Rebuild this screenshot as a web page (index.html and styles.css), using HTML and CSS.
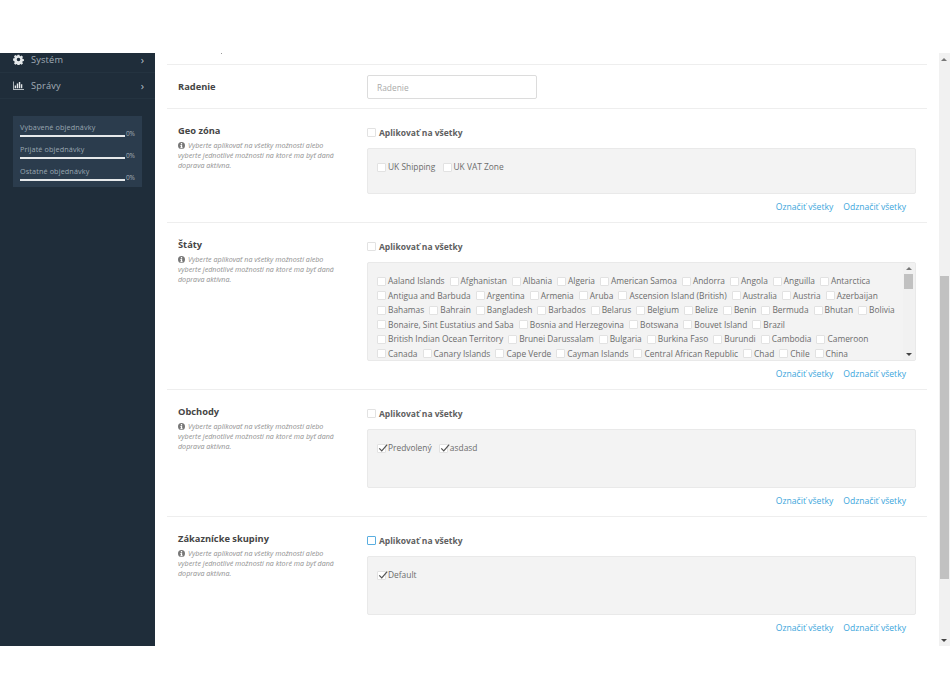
FILE: index.html
```html
<!DOCTYPE html>
<html lang="sk">
<head>
<meta charset="utf-8">
<title>Doprava</title>
<link rel="stylesheet" href="styles.css">
</head>
<body>
<div class="frame">
  <aside class="sidebar">
    <nav class="menu">
      <a class="menu-item first"><svg class="menu-icon" viewBox="0 0 16 16"><path fill="#e4e8ea" fill-rule="evenodd" d="M6.6 1h2.8l.4 1.9 1.2.5 1.6-1.1 2 2-1.100 1.600.5 1.200 1.900.4v2.800l-1.900.4-.5 1.200 1.100 1.600-2 2-1.600-1.100-1.200.5-.4 1.900H6.600l-.4-1.900-1.200-.5-1.600 1.100-2-2 1.100-1.600-.5-1.200L.1 9.400V6.600L2 6.200l.5-1.200L1.400 3.400l2-2L5 2.500l1.200-.5zM8 5.400a2.600 2.600 0 1 0 0 5.200 2.600 2.600 0 0 0 0-5.200z"/></svg><span class="menu-label">Systém</span><span class="chev">›</span></a>
      <a class="menu-item"><svg class="menu-icon" viewBox="0 0 16 16"><path fill="#e4e8ea" d="M0 2h1v11h15v1H0zM2.500 8h2v4h-2zM5.500 5h2v7h-2zM8.500 3h2v9h-2zM11.500 6h2v6h-2z"/></svg><span class="menu-label">Správy</span><span class="chev">›</span></a>
    </nav>
    <div class="stats">
      <div class="stat"><div class="stat-name">Vybavené objednávky</div><div class="stat-line"><span class="bar"></span><span class="pct">0%</span></div></div>
      <div class="stat"><div class="stat-name">Prijaté objednávky</div><div class="stat-line"><span class="bar"></span><span class="pct">0%</span></div></div>
      <div class="stat"><div class="stat-name">Ostatné objednávky</div><div class="stat-line"><span class="bar"></span><span class="pct">0%</span></div></div>
    </div>
  </aside>
  <main class="content">
    <div class="panel">
      <div class="row stub"><span class="speck"></span></div>
      <div class="row radenie">
        <div class="side"><h3 class="title">Radenie</h3></div>
        <div class="field"><input class="text-input" type="text" placeholder="Radenie"></div>
      </div>
      <div class="row geo">
        <div class="side">
          <h3 class="title">Geo zóna</h3>
          <p class="help"><svg class="info" viewBox="0 0 16 16"><path fill="#777" fill-rule="evenodd" d="M8 0a8 8 0 1 1 0 16A8 8 0 0 1 8 0zM6.500 2.500v3h3v-3zM5.500 7v2h1v3h-1v2h5v-2h-1V7z"/></svg>Vyberte aplikovať na všetky možnosti alebo vyberte jednotlivé možnosti na ktoré ma byť daná doprava aktívna.</p>
        </div>
        <div class="field">
          <label class="all"><span class="cb"></span>Aplikovať na všetky</label>
          <div class="box box-geo">
            <span class="opt"><span class="cb"></span>UK Shipping</span>
            <span class="opt"><span class="cb"></span>UK VAT Zone</span>
          </div>
          <div class="links"><a>Označiť všetky</a><a>Odznačiť všetky</a></div>
        </div>
      </div>
      <div class="row staty">
        <div class="side">
          <h3 class="title">Štáty</h3>
          <p class="help"><svg class="info" viewBox="0 0 16 16"><path fill="#777" fill-rule="evenodd" d="M8 0a8 8 0 1 1 0 16A8 8 0 0 1 8 0zM6.500 2.500v3h3v-3zM5.500 7v2h1v3h-1v2h5v-2h-1V7z"/></svg>Vyberte aplikovať na všetky možnosti alebo vyberte jednotlivé možnosti na ktoré ma byť daná doprava aktívna.</p>
        </div>
        <div class="field">
          <label class="all"><span class="cb"></span>Aplikovať na všetky</label>
          <div class="box box-staty">
            <div class="countries">
              <span class="opt"><span class="cb"></span>Aaland Islands</span>
              <span class="opt"><span class="cb"></span>Afghanistan</span>
              <span class="opt"><span class="cb"></span>Albania</span>
              <span class="opt"><span class="cb"></span>Algeria</span>
              <span class="opt"><span class="cb"></span>American Samoa</span>
              <span class="opt"><span class="cb"></span>Andorra</span>
              <span class="opt"><span class="cb"></span>Angola</span>
              <span class="opt"><span class="cb"></span>Anguilla</span>
              <span class="opt"><span class="cb"></span>Antarctica</span>
              <span class="opt"><span class="cb"></span>Antigua and Barbuda</span>
              <span class="opt"><span class="cb"></span>Argentina</span>
              <span class="opt"><span class="cb"></span>Armenia</span>
              <span class="opt"><span class="cb"></span>Aruba</span>
              <span class="opt"><span class="cb"></span>Ascension Island (British)</span>
              <span class="opt"><span class="cb"></span>Australia</span>
              <span class="opt"><span class="cb"></span>Austria</span>
              <span class="opt"><span class="cb"></span>Azerbaijan</span>
              <span class="opt"><span class="cb"></span>Bahamas</span>
              <span class="opt"><span class="cb"></span>Bahrain</span>
              <span class="opt"><span class="cb"></span>Bangladesh</span>
              <span class="opt"><span class="cb"></span>Barbados</span>
              <span class="opt"><span class="cb"></span>Belarus</span>
              <span class="opt"><span class="cb"></span>Belgium</span>
              <span class="opt"><span class="cb"></span>Belize</span>
              <span class="opt"><span class="cb"></span>Benin</span>
              <span class="opt"><span class="cb"></span>Bermuda</span>
              <span class="opt"><span class="cb"></span>Bhutan</span>
              <span class="opt"><span class="cb"></span>Bolivia</span>
              <span class="opt"><span class="cb"></span>Bonaire, Sint Eustatius and Saba</span>
              <span class="opt"><span class="cb"></span>Bosnia and Herzegovina</span>
              <span class="opt"><span class="cb"></span>Botswana</span>
              <span class="opt"><span class="cb"></span>Bouvet Island</span>
              <span class="opt"><span class="cb"></span>Brazil</span>
              <span class="opt"><span class="cb"></span>British Indian Ocean Territory</span>
              <span class="opt"><span class="cb"></span>Brunei Darussalam</span>
              <span class="opt"><span class="cb"></span>Bulgaria</span>
              <span class="opt"><span class="cb"></span>Burkina Faso</span>
              <span class="opt"><span class="cb"></span>Burundi</span>
              <span class="opt"><span class="cb"></span>Cambodia</span>
              <span class="opt"><span class="cb"></span>Cameroon</span>
              <span class="opt"><span class="cb"></span>Canada</span>
              <span class="opt"><span class="cb"></span>Canary Islands</span>
              <span class="opt"><span class="cb"></span>Cape Verde</span>
              <span class="opt"><span class="cb"></span>Cayman Islands</span>
              <span class="opt"><span class="cb"></span>Central African Republic</span>
              <span class="opt"><span class="cb"></span>Chad</span>
              <span class="opt"><span class="cb"></span>Chile</span>
              <span class="opt"><span class="cb"></span>China</span>
            </div>
            <div class="inner-scroll"><span class="arrow-up"></span><span class="inner-thumb"></span><span class="arrow-down"></span></div>
          </div>
          <div class="links"><a>Označiť všetky</a><a>Odznačiť všetky</a></div>
        </div>
      </div>
      <div class="row obchody">
        <div class="side">
          <h3 class="title">Obchody</h3>
          <p class="help"><svg class="info" viewBox="0 0 16 16"><path fill="#777" fill-rule="evenodd" d="M8 0a8 8 0 1 1 0 16A8 8 0 0 1 8 0zM6.500 2.500v3h3v-3zM5.500 7v2h1v3h-1v2h5v-2h-1V7z"/></svg>Vyberte aplikovať na všetky možnosti alebo vyberte jednotlivé možnosti na ktoré ma byť daná doprava aktívna.</p>
        </div>
        <div class="field">
          <label class="all"><span class="cb"></span>Aplikovať na všetky</label>
          <div class="box box-tall">
            <span class="opt"><span class="cb"><svg class="tick" viewBox="0 0 12 12"><path fill="none" stroke="#555" stroke-width="1.500" d="M1.500 6.500l3 3L11 2"/></svg></span>Predvolený</span>
            <span class="opt"><span class="cb"><svg class="tick" viewBox="0 0 12 12"><path fill="none" stroke="#555" stroke-width="1.500" d="M1.500 6.500l3 3L11 2"/></svg></span>asdasd</span>
          </div>
          <div class="links"><a>Označiť všetky</a><a>Odznačiť všetky</a></div>
        </div>
      </div>
      <div class="row skupiny">
        <div class="side">
          <h3 class="title">Zákaznícke skupiny</h3>
          <p class="help"><svg class="info" viewBox="0 0 16 16"><path fill="#777" fill-rule="evenodd" d="M8 0a8 8 0 1 1 0 16A8 8 0 0 1 8 0zM6.500 2.500v3h3v-3zM5.500 7v2h1v3h-1v2h5v-2h-1V7z"/></svg>Vyberte aplikovať na všetky možnosti alebo vyberte jednotlivé možnosti na ktoré ma byť daná doprava aktívna.</p>
        </div>
        <div class="field">
          <label class="all"><span class="cb focus"></span>Aplikovať na všetky</label>
          <div class="box box-tall">
            <span class="opt"><span class="cb"><svg class="tick" viewBox="0 0 12 12"><path fill="none" stroke="#555" stroke-width="1.500" d="M1.500 6.500l3 3L11 2"/></svg></span>Default</span>
          </div>
          <div class="links"><a>Označiť všetky</a><a>Odznačiť všetky</a></div>
        </div>
      </div>
    </div>
  </main>
  <div class="page-scroll"><span class="arrow-up"></span><span class="page-thumb"></span><span class="arrow-down"></span></div>
</div>
</body>
</html>
```
FILE: styles.css
```css
* { box-sizing: border-box; }
html, body { height: 100%; }
body {
  margin: 0;
  padding: 53px 0 54px;
  background: #fff;
  font-family: "Open Sans", "Noto Sans", sans-serif;
  font-size: 8.4px;
  color: #6c6c6c;
  overflow: hidden;
}
.frame { display: flex; height: 593px; }

/* sidebar */
.sidebar { width: 155px; flex: none; background: #1f2d3a; }
.menu-item {
  display: flex;
  align-items: center;
  height: 26px;
  padding: 0 11px 0 13px;
  border-bottom: 1px solid #243340;
  color: #a3aeb7;
  font-size: 9.200px;
}
.menu-item.first { height: 20px; padding-bottom: 7px; }
.menu-icon { width: 11px; height: 11px; flex: none; margin-right: 7px; }
.menu-label { flex: 1; letter-spacing: .2px; }
.chev { color: #b9c3ca; font-size: 11px; line-height: 1; }
.stats {
  margin: 17px 13px 0;
  height: 71px;
  padding: 7px 7px 0;
  background: #2b3c4d;
  display: flex;
  flex-direction: column;
  gap: 8px;
}
.stat-name { font-size: 7.200px; line-height: 9px; color: #9aa7b1; letter-spacing: .15px; }
.stat-line { display: flex; align-items: flex-end; height: 5px; }
.bar { width: 105px; height: 2px; background: #e6e9eb; }
.pct { margin-left: 1px; font-size: 6.500px; line-height: 7px; color: #a3aeb6; }

/* content */
.content { flex: 1; min-width: 0; overflow: hidden; background: #fff; }
.panel { margin: 0 12px; background: #fff; }
.row { display: flex; border-bottom: 1px solid #eeeeee; padding-left: 11px; }
.stub { height: 12px; padding-left: 54px; }
.speck { width: 1px; height: 1px; background: #999; }
.side { width: 189px; flex: none; }
.field { width: 549px; flex: none; }
.radenie { height: 44px; padding-top: 10px; }
.radenie .title { margin-top: 5px; }
.geo { height: 114px; padding-top: 15px; }
.staty { height: 167px; padding-top: 15px; }
.obchody { height: 127px; padding-top: 15px; }
.skupiny { height: 140px; padding-top: 15px; }

.title { margin: 0; font-size: 9.300px; line-height: 13px; font-weight: 700; color: #454545; }
.help { margin: 3px 0 0; width: 165px; font-size: 7.150px; line-height: 10px; font-style: italic; color: #909090; }
.info { width: 7px; height: 7px; margin-right: 3px; vertical-align: -.5px; }

.text-input {
  display: block;
  width: 170px;
  height: 24px;
  padding: 0 9px;
  border: 1px solid #dcdcdc;
  border-radius: 2px;
  background: #fff;
  font: 8.400px "Open Sans", sans-serif;
  color: #666;
}
.text-input::placeholder { color: #aaa; opacity: 1; }

.all {
  display: flex;
  align-items: center;
  height: 16px;
  font-size: 8.500px;
  font-weight: 700;
  color: #606060;
}
.all .cb { margin-right: 3px; }
.cb {
  position: relative;
  display: inline-block;
  flex: none;
  width: 9px;
  height: 9px;
  border: 1px solid #e2e2e2;
  border-radius: 1px;
  background: #fff;
  margin-right: 2px;
}
.cb.focus { border-color: #5aaee0; }
.tick { position: absolute; left: 0; top: -2px; width: 10px; height: 10px; }
.box {
  margin-top: 8px;
  background: #f3f3f3;
  border: 1px solid #e9e9e9;
  border-radius: 2px;
  padding: 11px 9px 0;
}
.box-geo { height: 46px; }
.box-tall { height: 59px; }
.box-staty { position: relative; height: 99px; overflow: hidden; padding: 11px 12px 0 9px; }
.opt { display: inline-flex; align-items: center; margin-right: 5px; line-height: 14.500px; height: 14.500px; }
.countries { display: flex; flex-wrap: wrap; }
.inner-scroll {
  position: absolute;
  top: 0;
  right: 0;
  bottom: 0;
  width: 12px;
  background: #f1f1f1;
}
.inner-thumb { position: absolute; top: 11px; left: 1px; width: 9px; height: 15px; background: #c1c1c1; }
.inner-scroll .arrow-up { top: 4px; left: 3px; }
.inner-scroll .arrow-down { bottom: 4px; left: 3px; }
.arrow-up, .arrow-down { position: absolute; width: 0; height: 0; border-left: 3px solid transparent; border-right: 3px solid transparent; }
.arrow-up { border-bottom: 3px solid #777; }
.arrow-down { border-top: 3px solid #444; }
.links { display: flex; justify-content: flex-end; gap: 10px; height: 23px; padding: 7.500px 10px 0 0; font-size: 8.600px; line-height: 11px; color: #3ba6dc; }

/* page scrollbar */
.page-scroll { position: relative; width: 11px; flex: none; background: #f1f1f1; }
.page-thumb { position: absolute; top: 223px; left: 1px; width: 9px; height: 303px; background: #c1c1c1; }
.page-scroll .arrow-up { top: 5px; left: 2px; }
.page-scroll .arrow-down { bottom: 4px; left: 2px; }
```
